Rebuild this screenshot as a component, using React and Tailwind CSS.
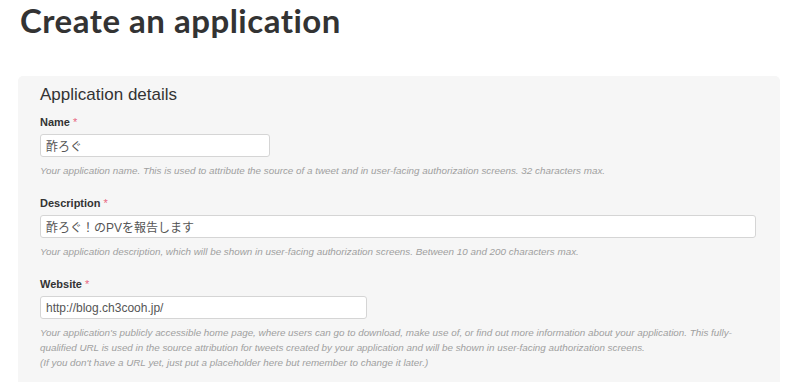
export default function App() {
  const arial = { fontFamily: '"Liberation Sans", Arial, "Noto Sans CJK JP", sans-serif' };
  return (
    <div className="w-[800px] h-[382px] overflow-hidden bg-white" style={arial}>
      <h1
        className="pl-[20px] pt-[1px] text-[33px] leading-[38px] font-bold text-[#333] tracking-[0.5px]"
        style={{ fontFamily: 'Lato, "Liberation Sans", sans-serif' }}
      >
        Create an application
      </h1>
      <div className="ml-[18px] mr-[20px] mt-[37px] rounded-[5px] bg-[#f6f6f6] pl-[22px] pr-[24px] pt-[9px] pb-[20px]">
        <h2 className="text-[17px] leading-[20px] text-[#333]">Application details</h2>
        <div className="mt-[10px]">
          <Label text="Name" />
          <input
            readOnly
            value="酢ろぐ"
            className="mt-[5px] block w-[230px] h-[23px] rounded-[3px] border border-[#d5d5d5] bg-white px-[5px] text-[12px] text-[#555] outline-none"
            style={arial}
          />
          <Help>
            Your application name. This is used to attribute the source of a tweet and in user-facing authorization screens. 32 characters max.
          </Help>
        </div>
        <div className="mt-[18px]">
          <Label text="Description" />
          <input
            readOnly
            value="酢ろぐ！のPVを報告します"
            className="mt-[5px] block w-full h-[23px] rounded-[3px] border border-[#d5d5d5] bg-white px-[5px] text-[12px] text-[#555] outline-none"
            style={arial}
          />
          <Help>
            Your application description, which will be shown in user-facing authorization screens. Between 10 and 200 characters max.
          </Help>
        </div>
        <div className="mt-[18px]">
          <Label text="Website" />
          <input
            readOnly
            value="http://blog.ch3cooh.jp/"
            className="mt-[5px] block w-[327px] h-[23px] rounded-[3px] border border-[#d5d5d5] bg-white px-[5px] text-[12px] text-[#555] outline-none"
            style={arial}
          />
          <Help>
            Your application's publicly accessible home page, where users can go to download, make use of, or find out more information about your application. This fully-
            <br />
            qualified URL is used in the source attribution for tweets created by your application and will be shown in user-facing authorization screens.
            <br />
            (If you don't have a URL yet, just put a placeholder here but remember to change it later.)
          </Help>
        </div>
      </div>
    </div>
  );
}

function Label({ text }) {
  return (
    <div className="text-[11px] leading-[14px] font-bold text-[#333]">
      {text} <span className="text-[#e8667f] font-normal">*</span>
    </div>
  );
}

function Help({ children }) {
  return (
    <p className="mt-[6px] text-[9.85px] leading-[15px] italic text-[#a0a0a0] whitespace-nowrap">{children}</p>
  );
}
